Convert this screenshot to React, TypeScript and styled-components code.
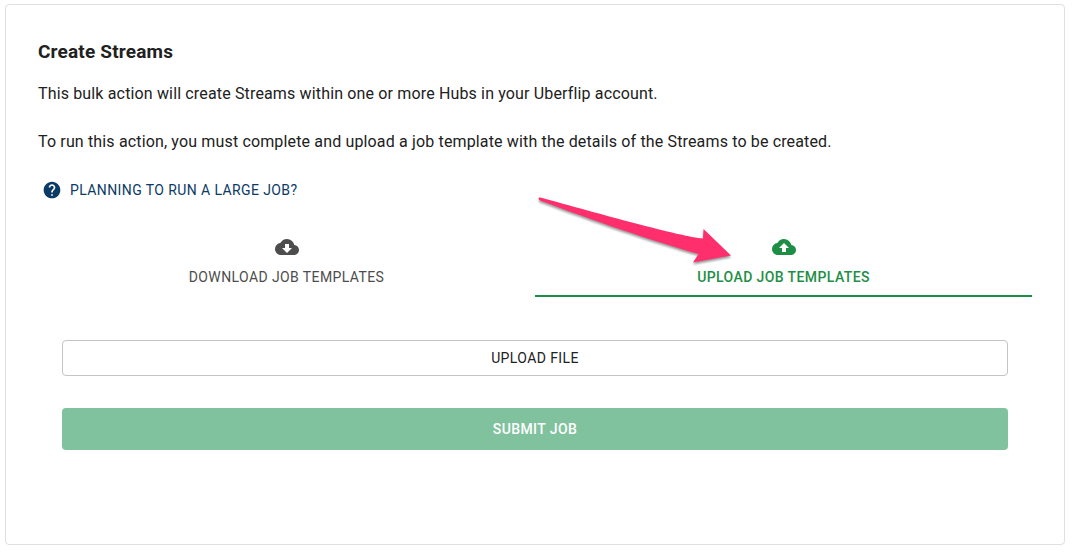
import React, { useState } from "react";
import styled, { createGlobalStyle } from "styled-components";
import { MdCloudDownload, MdCloudUpload, MdHelp } from "react-icons/md";

const GlobalStyle = createGlobalStyle`
  *, *::before, *::after { box-sizing: border-box; }
  body {
    margin: 0;
    background: #fff;
    color: #212121;
    font-family: Roboto, "Liberation Sans", sans-serif;
    font-size: 16px;
    line-height: 24px;
  }
  button { font-family: inherit; }
`;

const Card = styled.main`
  margin: 4px 8px 7px 5px;
  padding: 32px 32px 94px;
  border: 1px solid #e0e0e0;
  border-radius: 4px;
  background: #fff;
`;

const Title = styled.h1`
  margin: 0 0 16px;
  font-size: 19px;
  line-height: 29px;
  font-weight: 700;
  letter-spacing: 0.00938em;
`;

const Paragraph = styled.p`
  margin: 0 0 24px;
  letter-spacing: 0.00938em;
`;

const HelpButton = styled.button`
  display: flex;
  align-items: center;
  gap: 8px;
  height: 36px;
  margin: -6px 0 17px;
  padding: 0 4px;
  border: 0;
  background: transparent;
  color: #0b3a66;
  font-size: 14px;
  line-height: 24px;
  font-weight: 400;
  letter-spacing: 0.02857em;
  text-transform: uppercase;
  cursor: pointer;
`;

const TabList = styled.div`
  display: flex;
`;

const Tab = styled.button<{ $active: boolean }>`
  position: relative;
  flex: 1;
  display: flex;
  flex-direction: column;
  align-items: center;
  gap: 6px;
  height: 72px;
  padding: 10px 16px 6px;
  border: 0;
  border-bottom: 2px solid ${(p) => (p.$active ? "#1e8e46" : "transparent")};
  background: transparent;
  color: ${(p) => (p.$active ? "#1e8e46" : "#4d4d4d")};
  font-size: 14px;
  line-height: 24px;
  font-weight: ${(p) => (p.$active ? 500 : 400)};
  letter-spacing: 0.02857em;
  text-transform: uppercase;
  cursor: pointer;
`;

const Pointer = styled.svg`
  position: absolute;
  top: -33px;
  right: calc(50% + 44px);
  width: 208px;
  height: 80px;
  overflow: visible;
  pointer-events: none;
  filter: drop-shadow(0 2px 1px rgba(0, 0, 0, 0.4));
`;

const Actions = styled.form`
  display: flex;
  flex-direction: column;
  gap: 32px;
  padding: 43px 24px 0;
`;

const ActionButton = styled.button<{ $primary?: boolean }>`
  height: ${(p) => (p.$primary ? "42px" : "36px")};
  border: ${(p) => (p.$primary ? "0" : "1px solid #c4c4c4")};
  border-radius: 4px;
  background: ${(p) => (p.$primary ? "#81c29e" : "#fff")};
  color: ${(p) => (p.$primary ? "#fff" : "#212121")};
  font-size: 14px;
  line-height: 24px;
  font-weight: ${(p) => (p.$primary ? 500 : 400)};
  letter-spacing: 0.02857em;
  text-transform: uppercase;
  cursor: pointer;
`;

export default function App() {
  const [tab, setTab] = useState<"download" | "upload">("upload");
  return (
    <>
      <GlobalStyle />
      <Card>
        <Title>Create Streams</Title>
        <Paragraph>
          This bulk action will create Streams within one or more Hubs in your Uberflip account.
        </Paragraph>
        <Paragraph>
          To run this action, you must complete and upload a job template with the details of the
          Streams to be created.
        </Paragraph>
        <HelpButton type="button">
          <MdHelp size={20} aria-hidden />
          Planning to run a large job?
        </HelpButton>
        <TabList role="tablist">
          <Tab
            type="button"
            role="tab"
            aria-selected={tab === "download"}
            $active={tab === "download"}
            onClick={() => setTab("download")}
          >
            <MdCloudDownload size={24} aria-hidden />
            Download job templates
          </Tab>
          <Tab
            type="button"
            role="tab"
            aria-selected={tab === "upload"}
            $active={tab === "upload"}
            onClick={() => setTab("upload")}
          >
            <MdCloudUpload size={24} aria-hidden />
            Upload job templates
            <Pointer viewBox="0 0 208 80" aria-hidden>
              <path
                fill="#ff2f6e"
                d="M8.500 5.500Q6.500 5 6.500 6.500Q6.500 8 8.500 8.800C60 28 120 49 166.500 62L161 70.500L199 63.500L171.500 37L171 46.500C150 45 65 21 8.500 5.500Z"
              />
            </Pointer>
          </Tab>
        </TabList>
        <Actions onSubmit={(e: React.FormEvent) => e.preventDefault()}>
          <ActionButton type="button">Upload file</ActionButton>
          <ActionButton type="submit" $primary>
            Submit job
          </ActionButton>
        </Actions>
      </Card>
    </>
  );
}
